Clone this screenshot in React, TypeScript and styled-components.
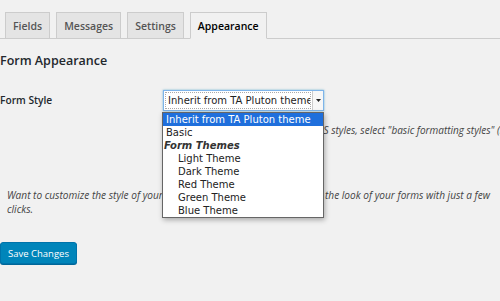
import React, { useState } from "react";
import styled, { createGlobalStyle } from "styled-components";

const GlobalStyle = createGlobalStyle`
  body {
    margin: 0;
    background: #f1f1f1;
    font-family: "Open Sans", "Liberation Sans", sans-serif;
    color: #23282d;
  }
`;

const Page = styled.div`
  width: 500px;
  height: 301px;
  overflow: hidden;
`;

const TabBar = styled.div`
  display: flex;
  gap: 6px;
  padding: 12px 0 0 5px;
  border-bottom: 1px solid #ccc;
`;

const Tab = styled.button<{ $active?: boolean }>`
  font-family: "Open Sans", sans-serif;
  font-size: 10.5px;
  font-weight: 600;
  height: 27px;
  padding: 0 7px;
  margin-bottom: -1px;
  border: 1px solid #ccc;
  border-bottom-color: ${(p) => (p.$active ? "#f1f1f1" : "#ccc")};
  background: ${(p) => (p.$active ? "#f1f1f1" : "#e4e4e4")};
  color: ${(p) => (p.$active ? "#000" : "#555")};
  cursor: pointer;
`;

const Heading = styled.h2`
  margin: 13px 0 0;
  font-size: 12.5px;
  font-weight: 600;
  line-height: 18px;
`;

const FormRow = styled.div`
  display: grid;
  grid-template-columns: 163px 1fr;
  margin-top: 20px;
`;

const Label = styled.div`
  font-size: 10.2px;
  font-weight: 600;
  line-height: 21px;
`;

const Field = styled.div`
  position: relative;
`;

const Select = styled.div`
  width: 159px;
  height: 19px;
  background: #fff;
  border: 1px solid #7eb4ea;
  box-shadow: 0 0 2px rgba(30, 140, 190, 0.6);
  display: flex;
  align-items: stretch;
  font-family: "DejaVu Sans", sans-serif;
  font-size: 10px;
  color: #222;
`;

const SelectValue = styled.div`
  flex: 1;
  margin: 1px;
  padding: 0 2px;
  border: 1px dotted #aaa;
  line-height: 15px;
  white-space: nowrap;
  overflow: hidden;
`;

const SelectArrow = styled.div`
  width: 10px;
  border-left: 1px solid #ccc;
  display: flex;
  align-items: center;
  justify-content: center;
  background: #f7f7f7;
`;

const Description = styled.p`
  margin: 11px 0 0;
  padding-left: 8px;
  font-size: 10px;
  font-style: italic;
  color: #444;
  white-space: nowrap;
  line-height: 16px;
`;

const Dropdown = styled.ul`
  position: absolute;
  left: -1px;
  top: 22px;
  width: 160px;
  margin: 0;
  padding: 0;
  list-style: none;
  background: #fff;
  border: 1px solid #666;
  box-shadow: 1px 2px 5px rgba(0, 0, 0, 0.3);
  font-family: "DejaVu Sans", sans-serif;
  font-size: 10px;
  color: #222;
  z-index: 2;
`;

const Option = styled.li<{ $selected?: boolean; $indent?: boolean }>`
  height: 13px;
  line-height: 13px;
  padding-left: ${(p) => (p.$indent ? "15px" : "3px")};
  background: ${(p) => (p.$selected ? "#1f6fdc" : "transparent")};
  color: ${(p) => (p.$selected ? "#fff" : "#222")};
  white-space: nowrap;
`;

const GroupLabel = styled.li`
  height: 13px;
  line-height: 13px;
  padding-left: 1px;
  font-weight: bold;
  font-style: italic;
  color: #333;
`;

const Paragraph = styled.p`
  margin: 50px 0 0;
  padding-left: 7px;
  width: 490px;
  font-size: 10.1px;
  font-style: italic;
  color: #444;
  line-height: 14px;
`;

const SaveButton = styled.button`
  margin-top: 26px;
  height: 22px;
  padding: 0 7px;
  font-family: "Open Sans", sans-serif;
  font-size: 9.5px;
  color: #fff;
  background: #0085ba;
  border: 1px solid #0073aa;
  border-radius: 3px;
  box-shadow: 0 1px 0 #006799;
  cursor: pointer;
`;

const themes = ["Light Theme", "Dark Theme", "Red Theme", "Green Theme", "Blue Theme"];

export default function App() {
  const [tab, setTab] = useState(3);
  const tabs = ["Fields", "Messages", "Settings", "Appearance"];

  return (
    <Page>
      <GlobalStyle />
      <TabBar>
        {tabs.map((t, i) => (
          <Tab key={t} $active={tab === i} onClick={() => setTab(i)}>
            {t}
          </Tab>
        ))}
      </TabBar>
      <Heading>Form Appearance</Heading>
      <FormRow>
        <Label>Form Style</Label>
        <Field>
          <Select>
            <SelectValue>Inherit from TA Pluton theme</SelectValue>
            <SelectArrow>
              <svg width="5" height="3" viewBox="0 0 5 3">
                <path d="M0 0h5L2.5 3z" fill="#222" />
              </svg>
            </SelectArrow>
          </Select>
          <Description>
            To ignore the TA Pluton theme's CSS styles, select "basic formatting styles" (no theme).
          </Description>
          <Dropdown>
            <Option $selected>Inherit from TA Pluton theme</Option>
            <Option>Basic</Option>
            <GroupLabel>Form Themes</GroupLabel>
            {themes.map((t) => (
              <Option key={t} $indent>
                {t}
              </Option>
            ))}
          </Dropdown>
        </Field>
      </FormRow>
      <Paragraph>
        Want to customize the style of your forms? Apply our themes to change the look of your forms with just a few clicks.
      </Paragraph>
      <SaveButton>Save Changes</SaveButton>
    </Page>
  );
}
